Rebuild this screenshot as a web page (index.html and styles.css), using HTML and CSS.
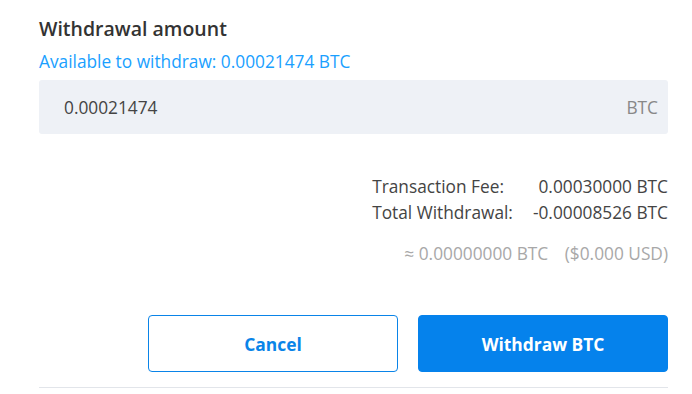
FILE: index.html
```html
<!DOCTYPE html>
<html>
<head>
<meta charset="utf-8">
<link rel="stylesheet" href="styles.css">
</head>
<body>
<div class="panel">
  <h2 class="title">Withdrawal amount</h2>
  <div class="available">Available to withdraw: 0.00021474 BTC</div>
  <div class="amount-field">
    <span class="amount-value">0.00021474</span>
    <span class="amount-unit">BTC</span>
  </div>
  <div class="summary">
    <div class="summary-grid">
      <span class="label">Transaction Fee:</span><span class="value">0.00030000 BTC</span>
      <span class="label">Total Withdrawal:</span><span class="value">-0.00008526 BTC</span>
    </div>
    <div class="approx">≈ 0.00000000 BTC <span class="usd">($0.000 USD)</span></div>
  </div>
  <div class="actions">
    <button class="btn btn-outline">Cancel</button>
    <button class="btn btn-primary">Withdraw BTC</button>
  </div>
  <div class="divider"></div>
</div>
</body>
</html>
```

FILE: styles.css
```css
html, body {
  margin: 0;
  padding: 0;
  background: #ffffff;
}
body {
  font-family: "Open Sans", "Noto Sans", sans-serif;
  width: 692px;
  height: 394px;
  overflow: hidden;
}
.panel {
  margin-left: 39px;
  width: 629px;
  padding-top: 16px;
}
.title {
  margin: 0;
  font-size: 19.5px;
  font-weight: 600;
  color: #333333;
  line-height: 26px;
}
.available {
  margin-top: 8px;
  font-size: 17.3px;
  color: #1a9fff;
  line-height: 24px;
}
.amount-field {
  margin-top: 6px;
  height: 54px;
  background: #eef1f6;
  border-radius: 3px;
  display: flex;
  align-items: center;
  justify-content: space-between;
  padding: 0 10px 0 25px;
  font-size: 17.3px;
}
.amount-value {
  color: #444444;
}
.amount-unit {
  color: #888888;
}
.summary {
  margin-top: 40px;
  display: flex;
  flex-direction: column;
  align-items: flex-end;
  font-size: 17.3px;
}
.summary-grid {
  display: grid;
  grid-template-columns: auto auto;
  column-gap: 20px;
  color: #444444;
  line-height: 26px;
}
.summary-grid .value {
  text-align: right;
}
.approx {
  margin-top: 16px;
  color: #a8a8a8;
  line-height: 24px;
}
.approx .usd {
  margin-left: 12px;
}
.actions {
  margin-top: 49px;
  display: flex;
  justify-content: flex-end;
  gap: 20px;
}
.btn {
  width: 250px;
  height: 57px;
  border-radius: 4px;
  font-family: "Open Sans", sans-serif;
  font-size: 17.4px;
  font-weight: 700;
  cursor: pointer;
}
.btn-outline {
  background: #ffffff;
  border: 1px solid #0a84e8;
  color: #0a84e8;
}
.btn-primary {
  background: #0582ec;
  border: 1px solid #0582ec;
  color: #ffffff;
}
.divider {
  margin-top: 15px;
  height: 1px;
  background: #e2e5ea;
}
```
